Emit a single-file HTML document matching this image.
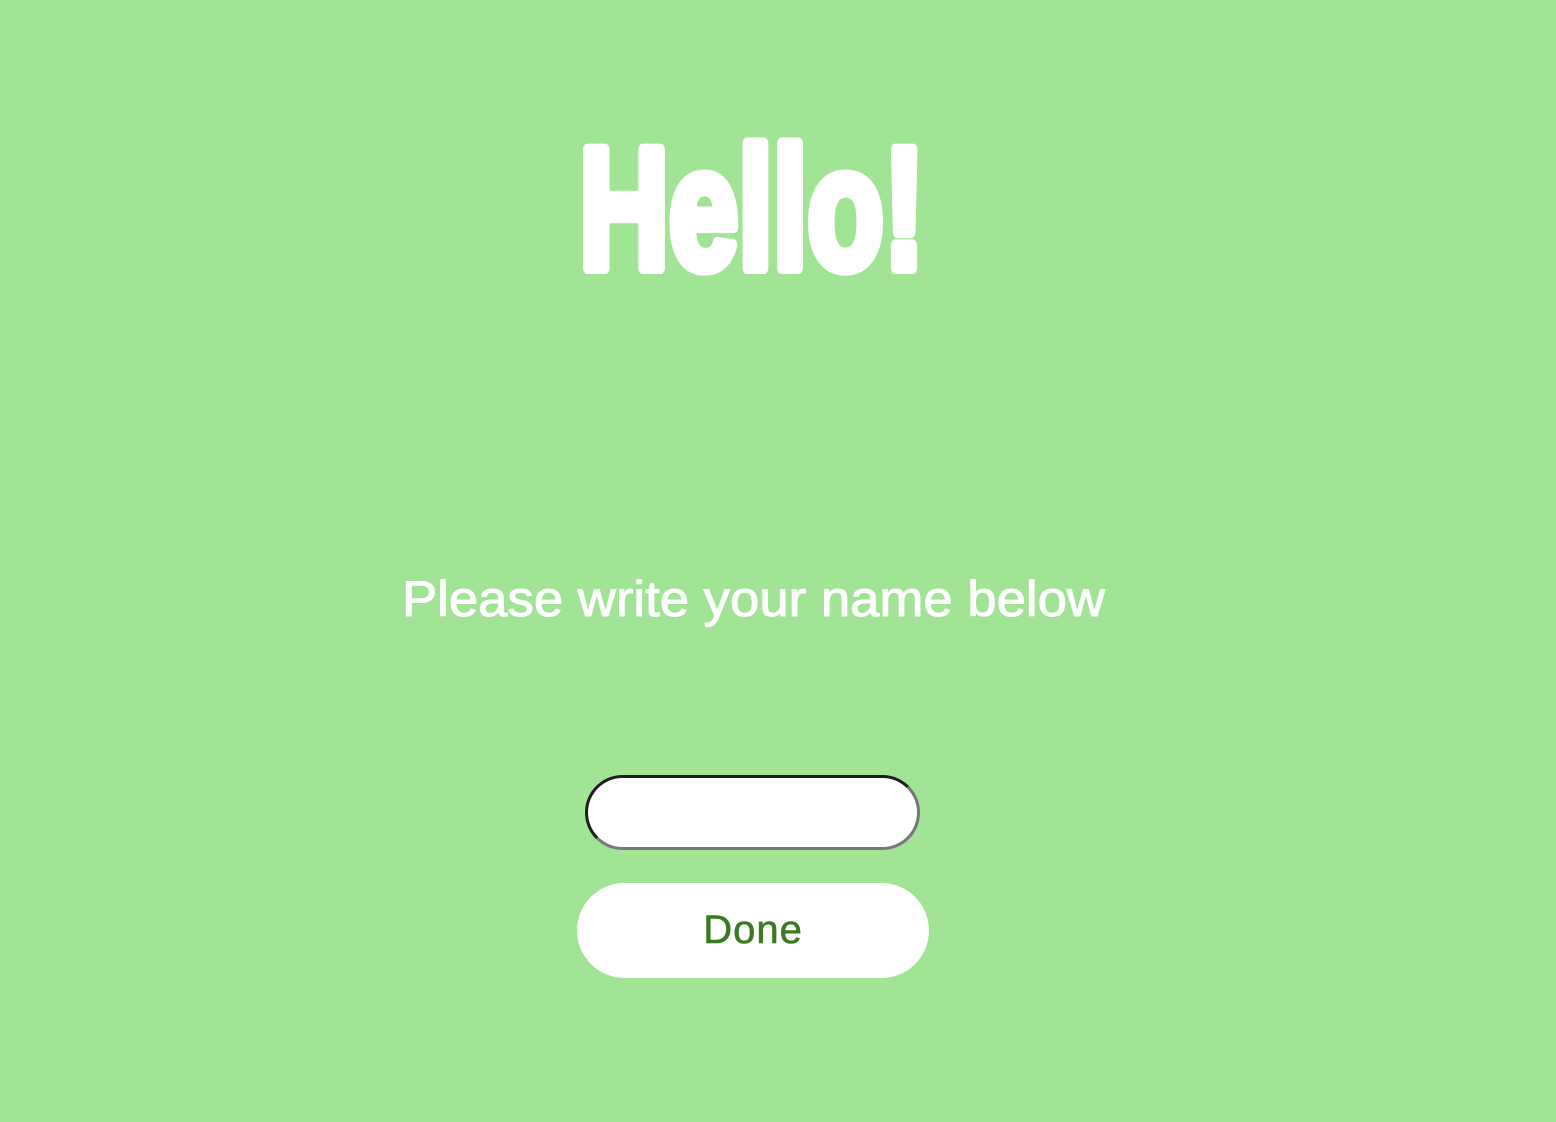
<!DOCTYPE html>
<html><head><meta charset="utf-8"><style>
html,body{margin:0;padding:0;width:1556px;height:1122px;background:#a1e495;overflow:hidden;font-family:"Liberation Sans",sans-serif}
svg{position:absolute;left:0;top:0}
.inp{position:absolute;left:585px;top:775px;width:329px;height:69px;border-radius:38px;background:#fff;border:3px solid;border-color:#1e1e1e #777 #777 #1e1e1e}
.btn{position:absolute;left:577px;top:883px;width:352px;height:95px;border-radius:48px;background:#fff;color:#3a7b22;font-size:40px;text-align:center;line-height:95px;letter-spacing:1px;-webkit-text-stroke:0.6px #3a7b22}
</style></head><body>
<svg width="1556" height="700">
<text x="579" y="268" font-family="Liberation Sans" font-weight="bold" font-size="172" fill="#fff" stroke="#fff" stroke-width="12" stroke-linejoin="round" textLength="346" lengthAdjust="spacingAndGlyphs">Hello!</text>
<text x="402" y="616" font-family="Liberation Sans" font-size="50" fill="#fff" stroke="#fff" stroke-width="1" textLength="703" lengthAdjust="spacingAndGlyphs">Please write your name below</text>
</svg>
<div class="inp"></div>
<div class="btn">Done</div>
</body></html>
